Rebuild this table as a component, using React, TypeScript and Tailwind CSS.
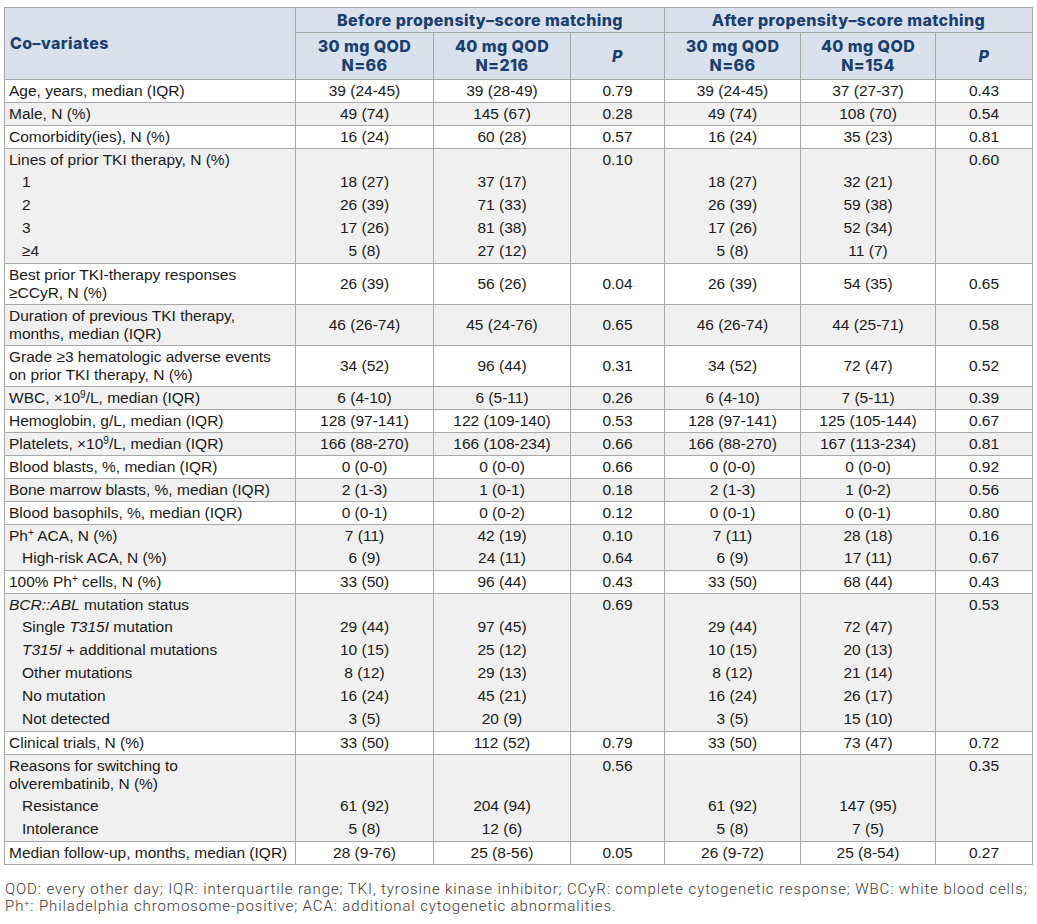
import React from "react";

type Row = {
  label: React.ReactNode;
  indent?: boolean;
  v: string[];
  top?: boolean;
};
type Group = { rows: Row[]; gray: boolean };

const Sup = ({ c }: { c: string }) => <sup className="text-[10px]">{c}</sup>;

const groups: Group[] = [
  { gray: false, rows: [{ label: "Age, years, median (IQR)", v: ["39 (24-45)", "39 (28-49)", "0.79", "39 (24-45)", "37 (27-37)", "0.43"] }] },
  { gray: true, rows: [{ label: "Male, N (%)", v: ["49 (74)", "145 (67)", "0.28", "49 (74)", "108 (70)", "0.54"] }] },
  { gray: false, rows: [{ label: "Comorbidity(ies), N (%)", v: ["16 (24)", "60 (28)", "0.57", "16 (24)", "35 (23)", "0.81"] }] },
  {
    gray: true,
    rows: [
      { label: "Lines of prior TKI therapy, N (%)", v: ["", "", "0.10", "", "", "0.60"] },
      { label: "1", indent: true, v: ["18 (27)", "37 (17)", "", "18 (27)", "32 (21)", ""] },
      { label: "2", indent: true, v: ["26 (39)", "71 (33)", "", "26 (39)", "59 (38)", ""] },
      { label: "3", indent: true, v: ["17 (26)", "81 (38)", "", "17 (26)", "52 (34)", ""] },
      { label: "≥4", indent: true, v: ["5 (8)", "27 (12)", "", "5 (8)", "11 (7)", ""] },
    ],
  },
  {
    gray: false,
    rows: [{ label: <>Best prior TKI-therapy responses<br />≥CCyR, N (%)</>, v: ["26 (39)", "56 (26)", "0.04", "26 (39)", "54 (35)", "0.65"] }],
  },
  {
    gray: true,
    rows: [{ label: <>Duration of previous TKI therapy,<br />months, median (IQR)</>, v: ["46 (26-74)", "45 (24-76)", "0.65", "46 (26-74)", "44 (25-71)", "0.58"] }],
  },
  {
    gray: false,
    rows: [{ label: <>Grade ≥3 hematologic adverse events<br />on prior TKI therapy, N (%)</>, v: ["34 (52)", "96 (44)", "0.31", "34 (52)", "72 (47)", "0.52"] }],
  },
  { gray: true, rows: [{ label: <>WBC, ×10<Sup c="9" />/L, median (IQR)</>, v: ["6 (4-10)", "6 (5-11)", "0.26", "6 (4-10)", "7 (5-11)", "0.39"] }] },
  { gray: false, rows: [{ label: "Hemoglobin, g/L, median (IQR)", v: ["128 (97-141)", "122 (109-140)", "0.53", "128 (97-141)", "125 (105-144)", "0.67"] }] },
  { gray: true, rows: [{ label: <>Platelets, ×10<Sup c="9" />/L, median (IQR)</>, v: ["166 (88-270)", "166 (108-234)", "0.66", "166 (88-270)", "167 (113-234)", "0.81"] }] },
  { gray: false, rows: [{ label: "Blood blasts, %, median (IQR)", v: ["0 (0-0)", "0 (0-0)", "0.66", "0 (0-0)", "0 (0-0)", "0.92"] }] },
  { gray: true, rows: [{ label: "Bone marrow blasts, %, median (IQR)", v: ["2 (1-3)", "1 (0-1)", "0.18", "2 (1-3)", "1 (0-2)", "0.56"] }] },
  { gray: false, rows: [{ label: "Blood basophils, %, median (IQR)", v: ["0 (0-1)", "0 (0-2)", "0.12", "0 (0-1)", "0 (0-1)", "0.80"] }] },
  {
    gray: true,
    rows: [
      { label: <>Ph<Sup c="+" /> ACA, N (%)</>, v: ["7 (11)", "42 (19)", "0.10", "7 (11)", "28 (18)", "0.16"] },
      { label: "High-risk ACA, N (%)", indent: true, v: ["6 (9)", "24 (11)", "0.64", "6 (9)", "17 (11)", "0.67"] },
    ],
  },
  { gray: false, rows: [{ label: <>100% Ph<Sup c="+" /> cells, N (%)</>, v: ["33 (50)", "96 (44)", "0.43", "33 (50)", "68 (44)", "0.43"] }] },
  {
    gray: true,
    rows: [
      { label: <><i>BCR::ABL</i> mutation status</>, v: ["", "", "0.69", "", "", "0.53"] },
      { label: <>Single <i>T315I</i> mutation</>, indent: true, v: ["29 (44)", "97 (45)", "", "29 (44)", "72 (47)", ""] },
      { label: <><i>T315I</i> + additional mutations</>, indent: true, v: ["10 (15)", "25 (12)", "", "10 (15)", "20 (13)", ""] },
      { label: "Other mutations", indent: true, v: ["8 (12)", "29 (13)", "", "8 (12)", "21 (14)", ""] },
      { label: "No mutation", indent: true, v: ["16 (24)", "45 (21)", "", "16 (24)", "26 (17)", ""] },
      { label: "Not detected", indent: true, v: ["3 (5)", "20 (9)", "", "3 (5)", "15 (10)", ""] },
    ],
  },
  { gray: false, rows: [{ label: "Clinical trials, N (%)", v: ["33 (50)", "112 (52)", "0.79", "33 (50)", "73 (47)", "0.72"] }] },
  {
    gray: true,
    rows: [
      { label: <>Reasons for switching to<br />olverembatinib, N (%)</>, top: true, v: ["", "", "0.56", "", "", "0.35"] },
      { label: "Resistance", indent: true, v: ["61 (92)", "204 (94)", "", "61 (92)", "147 (95)", ""] },
      { label: "Intolerance", indent: true, v: ["5 (8)", "12 (6)", "", "5 (8)", "7 (5)", ""] },
    ],
  },
  { gray: false, rows: [{ label: "Median follow-up, months, median (IQR)", v: ["28 (9-76)", "25 (8-56)", "0.05", "26 (9-72)", "25 (8-54)", "0.27"] }] },
];

const hd = "border border-[#a8a8a8] text-center font-extrabold text-[#1b3f6e]";

export default function App() {
  return (
    <div className="w-[1037px] h-[924px] bg-white pl-[4px] pt-[7px]">
      <table
        className="table-fixed border-collapse text-[15.5px] leading-[18px] text-[#1a1a1a]"
        style={{ fontFamily: '"Liberation Sans", Arial, sans-serif', width: 1028 }}
      >
        <colgroup>
          <col className="w-[291px]" />
          <col className="w-[138px]" />
          <col className="w-[137px]" />
          <col className="w-[94px]" />
          <col className="w-[136px]" />
          <col className="w-[135px]" />
          <col className="w-[97px]" />
        </colgroup>
        <thead
          className="bg-[#d9e2ec] text-[16px] leading-[19px] tracking-[0.4px]"
          style={{ fontFamily: 'Inter, "Open Sans", sans-serif' }}
        >
          <tr className="h-[25px]">
            <th rowSpan={2} className="border border-[#a8a8a8] text-left font-extrabold text-[#1b3f6e] pl-[5px]">
              Co–variates
            </th>
            <th colSpan={3} className={hd}>Before propensity–score matching</th>
            <th colSpan={3} className={hd}>After propensity–score matching</th>
          </tr>
          <tr className="h-[47px]">
            <th className={hd}>30 mg QOD<br />N=66</th>
            <th className={hd}>40 mg QOD<br />N=216</th>
            <th className={hd}><i>P</i></th>
            <th className={hd}>30 mg QOD<br />N=66</th>
            <th className={hd}>40 mg QOD<br />N=154</th>
            <th className={hd}><i>P</i></th>
          </tr>
        </thead>
        <tbody>
          {groups.map((g, gi) =>
            g.rows.map((r, ri) => {
              const first = ri === 0;
              const last = ri === g.rows.length - 1;
              const bt = first ? "border-t" : "border-t-0";
              const bb = last ? "border-b" : "border-b-0";
              const va = r.top ? "align-top" : "align-middle";
              const pad = first ? "py-[2px]" : "pt-[2px] pb-[3px]";
              const bg = g.gray ? "bg-[#f0f0f0]" : "bg-white";
              return (
                <tr key={`${gi}-${ri}`} className={bg}>
                  <td
                    className={`border-x border-[#a8a8a8] ${bt} ${bb} ${va} ${pad} ${r.indent ? "pl-[17px]" : "pl-[4px]"} pr-1 whitespace-nowrap`}
                  >
                    {r.label}
                  </td>
                  {r.v.map((c, ci) => (
                    <td
                      key={ci}
                      className={`border-x border-[#a8a8a8] ${bt} ${bb} ${va} ${pad} text-center whitespace-nowrap`}
                    >
                      {c}
                    </td>
                  ))}
                </tr>
              );
            })
          )}
        </tbody>
      </table>
      <p
        className="mt-[16px] pl-[1px] text-[15px] leading-[17px] tracking-[0.9px] text-[#3a3a3a] whitespace-nowrap"
        style={{ fontFamily: 'Roboto, "Liberation Sans", sans-serif', fontWeight: 300 }}
      >
        QOD: every other day; IQR: interquartile range; TKI, tyrosine kinase inhibitor; CCyR: complete cytogenetic response; WBC: white blood cells;
        <br />
        Ph<sup className="text-[9px]">+</sup>: Philadelphia chromosome-positive; ACA: additional cytogenetic abnormalities.
      </p>
    </div>
  );
}
